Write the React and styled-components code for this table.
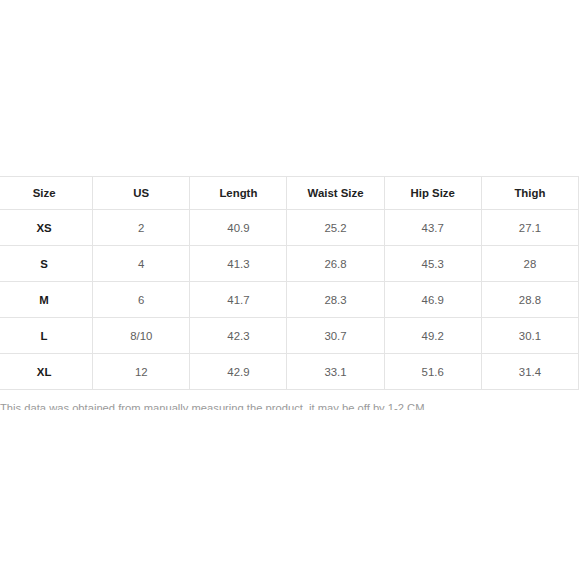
import React from "react";
import styled, { createGlobalStyle } from "styled-components";

const GlobalStyle = createGlobalStyle`
  body {
    margin: 0;
    background: #ffffff;
    font-family: "Liberation Sans", Arial, sans-serif;
  }
`;

const headers = ["Size", "US", "Length", "Waist Size", "Hip Size", "Thigh"];

const rows = [
  ["XS", "2", "40.9", "25.2", "43.7", "27.1"],
  ["S", "4", "41.3", "26.8", "45.3", "28"],
  ["M", "6", "41.7", "28.3", "46.9", "28.8"],
  ["L", "8/10", "42.3", "30.7", "49.2", "30.1"],
  ["XL", "12", "42.9", "33.1", "51.6", "31.4"],
];

const App = () => {
  return (
    <Page>
      <GlobalStyle />
      <Chart>
        <colgroup>
          {headers.map((h) => (
            <col key={h} />
          ))}
        </colgroup>
        <thead>
          <tr>
            {headers.map((h) => (
              <HeadCell key={h}>{h}</HeadCell>
            ))}
          </tr>
        </thead>
        <tbody>
          {rows.map((row) => (
            <tr key={row[0]}>
              {row.map((value, i) => (
                <Cell key={i} $label={i === 0}>
                  {value}
                </Cell>
              ))}
            </tr>
          ))}
        </tbody>
      </Chart>
      <Note>
        This data was obtained from manually measuring the product, it may be
        off by 1-2 CM.
      </Note>
    </Page>
  );
};

// the shot is a crop: the note under the table is cut at its middle
const Page = styled.div`
  width: 580px;
  height: 410px;
  padding-top: 176px;
  box-sizing: border-box;
  overflow: hidden;
`;

const Chart = styled.table`
  width: 584px;
  margin-left: -5px;
  border-collapse: collapse;
  table-layout: fixed;
  font-size: 11.4px;
`;

const HeadCell = styled.th`
  height: 32px;
  padding: 0;
  border: 1px solid #e4e4e4;
  text-align: center;
  font-weight: bold;
  color: #222222;
`;

const Cell = styled.td`
  height: 35px;
  padding: 0;
  border: 1px solid #e4e4e4;
  text-align: center;
  font-weight: ${(p) => (p.$label ? "bold" : "normal")};
  color: ${(p) => (p.$label ? "#1a1a1a" : "#606060")};
`;

const Note = styled.p`
  margin: 12px 0 0 0;
  font-size: 11.2px;
  line-height: 13px;
  color: #9a9a9a;
  white-space: nowrap;
`;

export default App;
